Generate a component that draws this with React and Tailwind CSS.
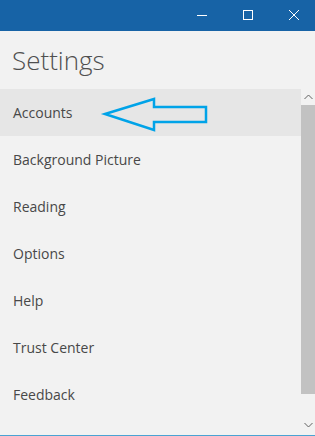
import React from 'react';

const items = ['Accounts', 'Background Picture', 'Reading', 'Options', 'Help', 'Trust Center', 'Feedback'];

function Arrow() {
  return (
    <svg className="absolute left-[100px] top-[8px]" width="110" height="38" viewBox="0 0 110 38">
      <polygon
        points="5,17 54,2 54,10 106,10 106,25 54,25 54,33"
        fill="none"
        stroke="#00a3e8"
        strokeWidth="2.5"
        strokeLinejoin="miter"
      />
    </svg>
  );
}

export default function App() {
  return (
    <div className="w-[315px] h-[436px] bg-[#f2f2f2] flex flex-col overflow-hidden" style={{ fontFamily: '"Open Sans", "Noto Sans", sans-serif' }}>
      {/* title bar */}
      <div className="h-[31px] bg-[#1763a6] flex items-center justify-end shrink-0">
        <svg width="315" height="31" viewBox="0 0 315 31" className="block">
          <line x1="197" y1="15.5" x2="207" y2="15.5" stroke="#fff" strokeWidth="1" />
          <rect x="243.5" y="10.5" width="9" height="9" fill="none" stroke="#fff" strokeWidth="1" />
          <line x1="289" y1="10" x2="299" y2="20" stroke="#fff" strokeWidth="1" />
          <line x1="299" y1="10" x2="289" y2="20" stroke="#fff" strokeWidth="1" />
        </svg>
      </div>

      <div className="h-[58px] shrink-0 pl-[12px] pt-[12px]">
        <h1 className="text-[26px] leading-[34px] font-light text-[#4f4f4f]">Settings</h1>
      </div>

      <div className="flex flex-1 min-h-0">
        <div className="flex-1 flex flex-col">
          {items.map((item, i) => (
            <div
              key={item}
              className={`relative h-[47px] shrink-0 flex items-center pl-[13px] text-[14px] text-[#484848] ${i === 0 ? 'bg-[#e6e6e6] h-[46px]' : ''}`}
            >
              {item}
              {i === 0 && <Arrow />}
            </div>
          ))}
        </div>
        {/* scrollbar */}
        <div className="w-[14px] flex flex-col">
          <div className="h-[16px] flex items-center justify-center">
            <svg width="9" height="6" viewBox="0 0 9 6">
              <polyline points="0.5,5 4.5,1 8.5,5" fill="none" stroke="#606060" strokeWidth="1" />
            </svg>
          </div>
          <div className="h-[289px] bg-[#c2c2c2]" />
          <div className="flex-1 flex items-end justify-center pb-[7px]">
            <svg width="9" height="6" viewBox="0 0 9 6">
              <polyline points="0.5,1 4.5,5 8.5,1" fill="none" stroke="#606060" strokeWidth="1" />
            </svg>
          </div>
        </div>
      </div>
      <div className="h-[1px] bg-[#4aa3d3] shrink-0" />
    </div>
  );
}
